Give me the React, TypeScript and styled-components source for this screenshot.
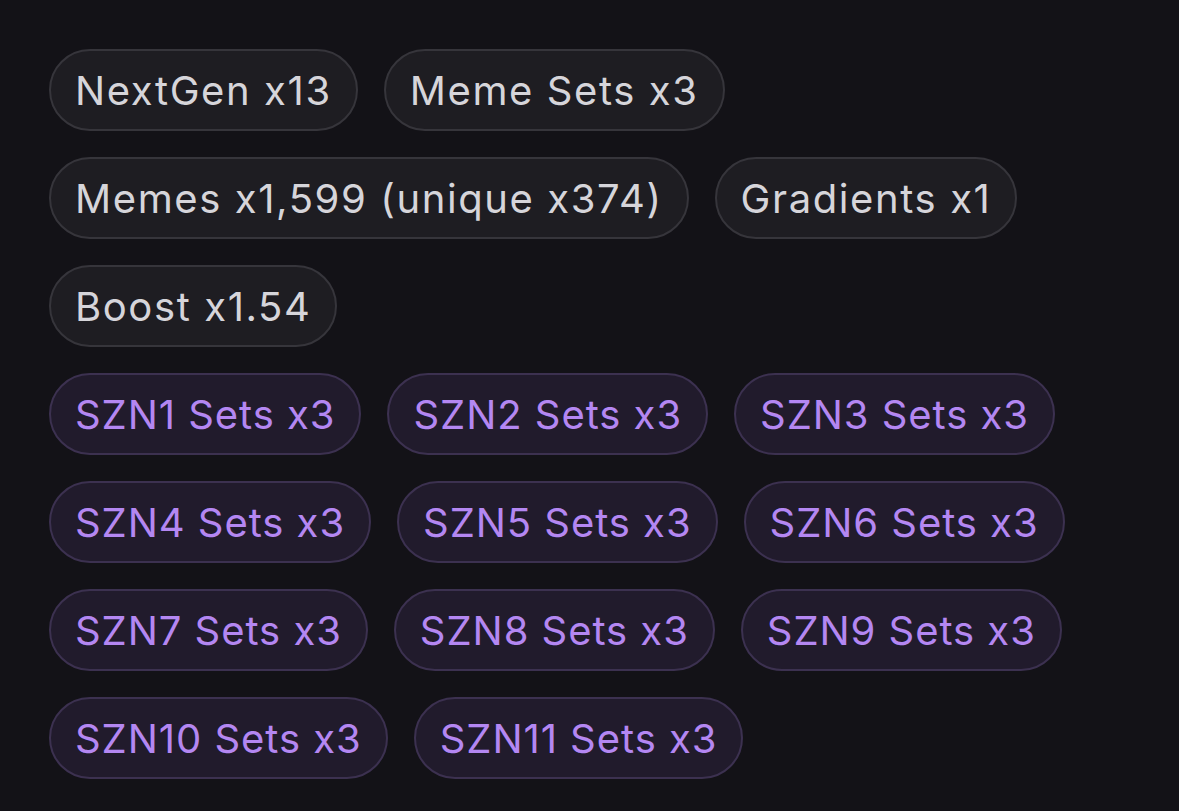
import React from "react";
import styled, { createGlobalStyle } from "styled-components";

const GlobalStyle = createGlobalStyle`
  html, body {
    margin: 0;
    padding: 0;
    background: #131217;
  }
`;

const Page = styled.div`
  min-height: 811px;
  box-sizing: border-box;
  padding: 49px 49px 0 49px;
  display: flex;
  flex-direction: column;
  gap: 26px;
  font-family: Inter, "Liberation Sans", sans-serif;
`;

const Group = styled.div`
  display: flex;
  flex-wrap: wrap;
  gap: 26px;
`;

const Pill = styled.span<{ $accent?: boolean }>`
  display: inline-flex;
  align-items: center;
  box-sizing: border-box;
  height: 82px;
  padding: 0 24px;
  border-radius: 41px;
  border: 2px solid ${(p) => (p.$accent ? "#3c3150" : "#36353b")};
  background: ${(p) => (p.$accent ? "#211b2c" : "#1e1d22")};
  color: ${(p) => (p.$accent ? "#b487f2" : "#d6d5da")};
  font-size: 40px;
  font-weight: 400;
  letter-spacing: ${(p) => (p.$accent ? "0.95px" : "1.6px")};
  white-space: nowrap;
`;

const stats = [
  "NextGen x13",
  "Meme Sets x3",
  "Memes x1,599 (unique x374)",
  "Gradients x1",
  "Boost x1.54",
];

const seasons = Array.from({ length: 11 }, (_, i) => `SZN${i + 1} Sets x3`);

export default function App() {
  return (
    <>
      <GlobalStyle />
      <Page>
        <Group>
          {stats.map((s) => (
            <Pill key={s}>{s}</Pill>
          ))}
        </Group>
        <Group>
          {seasons.map((s) => (
            <Pill key={s} $accent>
              {s}
            </Pill>
          ))}
        </Group>
      </Page>
    </>
  );
}
